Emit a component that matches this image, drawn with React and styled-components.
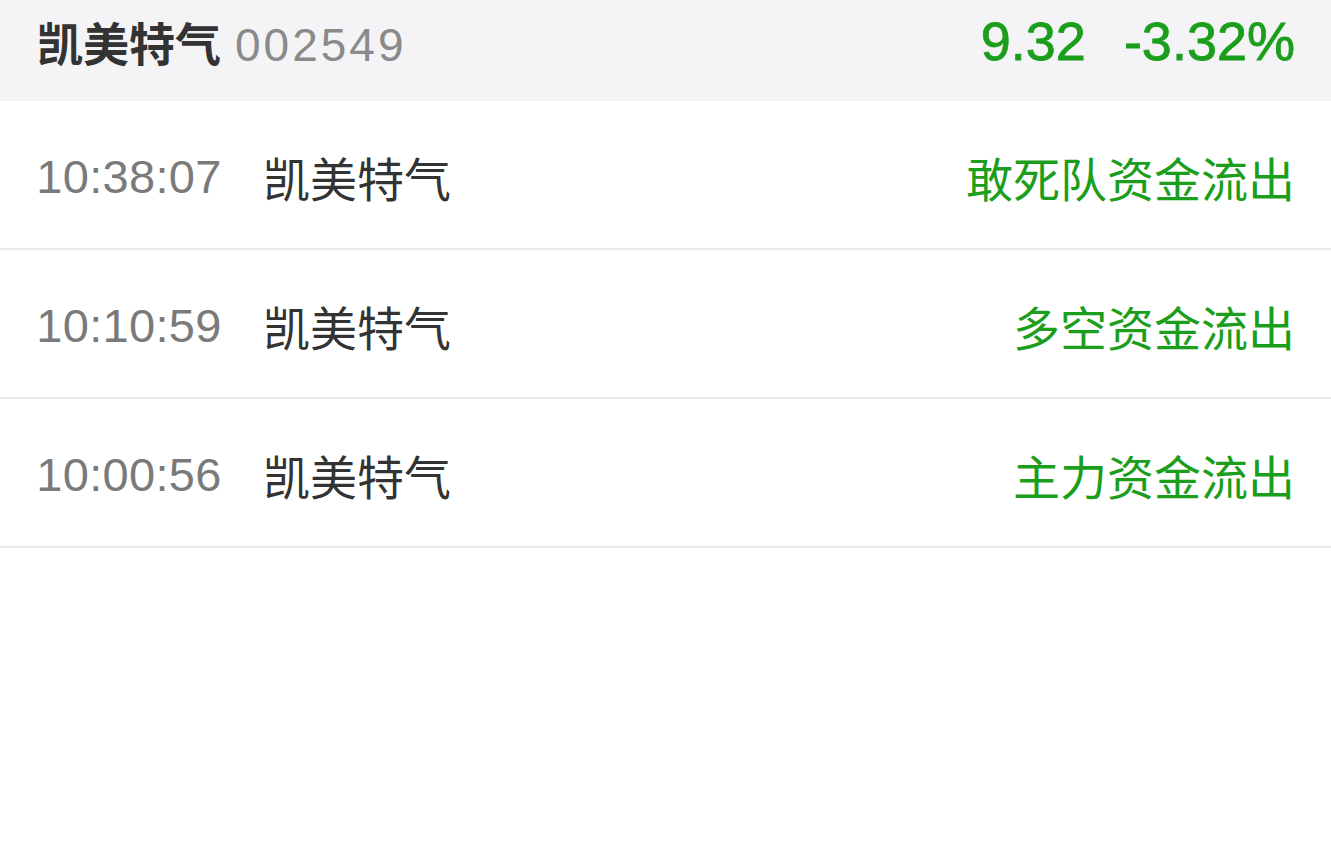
import styled, { createGlobalStyle } from "styled-components";

const GlobalStyle = createGlobalStyle`
  html, body {
    margin: 0;
    padding: 0;
    background: #ffffff;
  }
  body {
    font-family: "Liberation Sans", "Noto Sans CJK SC", sans-serif;
  }
`;

const rows = [
  { time: "10:38:07", name: "凯美特气", signal: "敢死队资金流出" },
  { time: "10:10:59", name: "凯美特气", signal: "多空资金流出" },
  { time: "10:00:56", name: "凯美特气", signal: "主力资金流出" },
];

const App = () => {
  return (
    <>
      <GlobalStyle />
      <Page>
        <Header>
          <StockTitle>
            <StockName>凯美特气</StockName>
            <StockCode>002549</StockCode>
          </StockTitle>
          <Quote>
            <span>9.32</span>
            <span>-3.32%</span>
          </Quote>
        </Header>

        <List>
          {rows.map((row) => (
            <Row key={row.time}>
              <Time>{row.time}</Time>
              <Name>{row.name}</Name>
              <Signal>{row.signal}</Signal>
            </Row>
          ))}
        </List>
      </Page>
    </>
  );
};

export default App;

const GREEN = "#1b9e1b";

const Page = styled.div`
  width: 1331px;
  height: 845px;
  background: #ffffff;
  overflow: hidden;
`;

const Header = styled.div`
  height: 101px;
  box-sizing: border-box;
  background: #f4f4f6;
  display: flex;
  align-items: center;
  justify-content: space-between;
  padding: 0 36px 20px 37px;
`;

const StockTitle = styled.div`
  display: flex;
  align-items: baseline;
  gap: 14px;
`;

const StockName = styled.span`
  font-size: 46px;
  font-weight: 700;
  color: #333333;
`;

const StockCode = styled.span`
  font-size: 46px;
  letter-spacing: 3px;
  color: #8a8a8a;
`;

const Quote = styled.div`
  display: flex;
  gap: 38px;
  font-size: 54px;
  color: ${GREEN};
  -webkit-text-stroke: 0.8px ${GREEN};
`;

const List = styled.div`
  display: flex;
  flex-direction: column;
`;

const Row = styled.div`
  height: 149px;
  box-sizing: border-box;
  border-bottom: 2px solid #ebebeb;
  display: flex;
  align-items: center;
  padding: 4px 36px 0 17px;
`;

const Time = styled.span`
  width: 224px;
  text-align: center;
  font-size: 47px;
  letter-spacing: 0.3px;
  color: #7a7a7a;
`;

const Name = styled.span`
  margin-left: 22px;
  font-size: 47px;
  color: #333333;
`;

const Signal = styled.span`
  margin-left: auto;
  font-size: 47px;
  color: ${GREEN};
`;
